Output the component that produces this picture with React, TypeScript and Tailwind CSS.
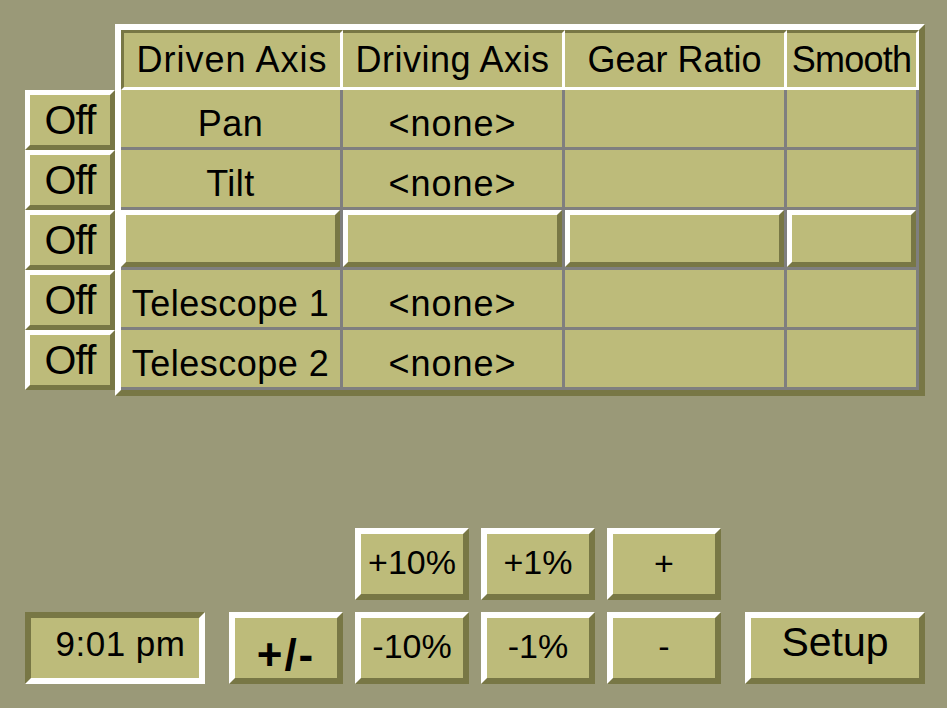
import React from "react";

const raised6 =
  "border-[6px] border-t-white border-l-white border-r-[#787745] border-b-[#787745]";
const sunken6 =
  "border-[6px] border-t-[#787745] border-l-[#787745] border-r-white border-b-white";
const raised5 =
  "border-[5px] border-t-white border-l-white border-r-[#787745] border-b-[#787745]";

const face = "bg-[#bdbb7a]";

function HeaderCell({ text, first, track }: { text: string; first?: boolean; track: string }) {
  return (
    <div
      className={
        "flex items-center justify-center whitespace-nowrap text-[36px] leading-none text-black border-t-[3px] border-r-[3px] border-b-[3px] border-t-[#787745] border-r-white border-b-white " +
        (first ? "border-l-[3px] border-l-[#787745] " : "") +
        track
      }
    >
      {text}
    </div>
  );
}

function BodyCell({ text, track }: { text?: string; track?: string }) {
  return (
    <div
      className={
        "flex items-center justify-center pt-[10px] whitespace-nowrap text-[36px] leading-none text-black border-r-[3px] border-b-[3px] border-[#7f7f7f] " +
        (track || "")
      }
    >
      {text}
    </div>
  );
}

function EmptyButtonCell() {
  return (
    <div className="flex border-r-[3px] border-b-[3px] border-[#7f7f7f]">
      <div className={"flex-1 " + raised5 + " " + face}></div>
    </div>
  );
}

function OffButton() {
  return (
    <div
      className={
        "h-[60px] w-[90px] flex items-center justify-center text-[41px] leading-none text-black tracking-[-1px] " +
        raised5 +
        " " +
        face
      }
    >
      Off
    </div>
  );
}

function Btn({ text, extra }: { text: string; extra?: string }) {
  return (
    <div
      className={
        "w-[114px] h-[72px] flex items-center justify-center text-[34px] leading-none text-black whitespace-nowrap " +
        raised6 +
        " " +
        face +
        " " +
        (extra || "")
      }
    >
      {text}
    </div>
  );
}

export default function App() {
  const rows = [
    { a: "Pan", b: "<none>" },
    { a: "Tilt", b: "<none>" },
    null,
    { a: "Telescope 1", b: "<none>" },
    { a: "Telescope 2", b: "<none>" },
  ];
  return (
    <div className="w-[947px] h-[708px] overflow-hidden bg-[#9a9978] flex flex-col pt-[24px] pl-[25px] font-['Liberation_Sans',Arial,sans-serif]">
      <div className="flex">
        <div className="flex flex-col mt-[66px] w-[90px]">
          <OffButton />
          <OffButton />
          <OffButton />
          <OffButton />
          <OffButton />
        </div>
        <div
          className={
            "w-[810px] h-[372px] grid grid-cols-[222px_222px_222px_132px] grid-rows-[60px_60px_60px_60px_60px_60px] " +
            raised6 +
            " " +
            face
          }
        >
          <HeaderCell text="Driven Axis" first track="tracking-[1px]" />
          <HeaderCell text="Driving Axis" track="tracking-[0.5px]" />
          <HeaderCell text="Gear Ratio" track="" />
          <HeaderCell text="Smooth" track="tracking-[-0.8px]" />
          {rows.map((r, i) =>
            r ? (
              <React.Fragment key={i}>
                <BodyCell text={r.a} track="tracking-[0.5px]" />
                <BodyCell text={r.b} track="tracking-[1px]" />
                <BodyCell />
                <BodyCell />
              </React.Fragment>
            ) : (
              <React.Fragment key={i}>
                <EmptyButtonCell />
                <EmptyButtonCell />
                <EmptyButtonCell />
                <EmptyButtonCell />
              </React.Fragment>
            )
          )}
        </div>
      </div>

      <div className="mt-[132px] flex gap-[12px] pl-[330px]">
        <Btn text="+10%" extra="pb-[4px]" />
        <Btn text="+1%" extra="pb-[4px]" />
        <Btn text="+" extra="pb-[2px]" />
      </div>
      <div className="mt-[12px] flex">
        <div
          className={
            "w-[180px] h-[72px] flex items-center justify-center pl-[11px] pb-[10px] text-[35px] leading-none text-black whitespace-nowrap tracking-[0.5px] " +
            sunken6 +
            " " +
            face
          }
        >
          9:01 pm
        </div>
        <div className="ml-[24px]">
          <Btn text="+/-" extra="font-bold text-[44px] tracking-[2px] pt-[14px]" />
        </div>
        <div className="ml-[12px] flex gap-[12px]">
          <Btn text="-10%" extra="pb-[4px]" />
          <Btn text="-1%" extra="pb-[4px]" />
          <Btn text="-" extra="pb-[4px]" />
        </div>
        <div
          className={
            "ml-[24px] w-[180px] h-[72px] flex items-center justify-center pb-[11px] text-[41px] leading-none text-black " +
            raised6 +
            " " +
            face
          }
        >
          Setup
        </div>
      </div>
    </div>
  );
}
